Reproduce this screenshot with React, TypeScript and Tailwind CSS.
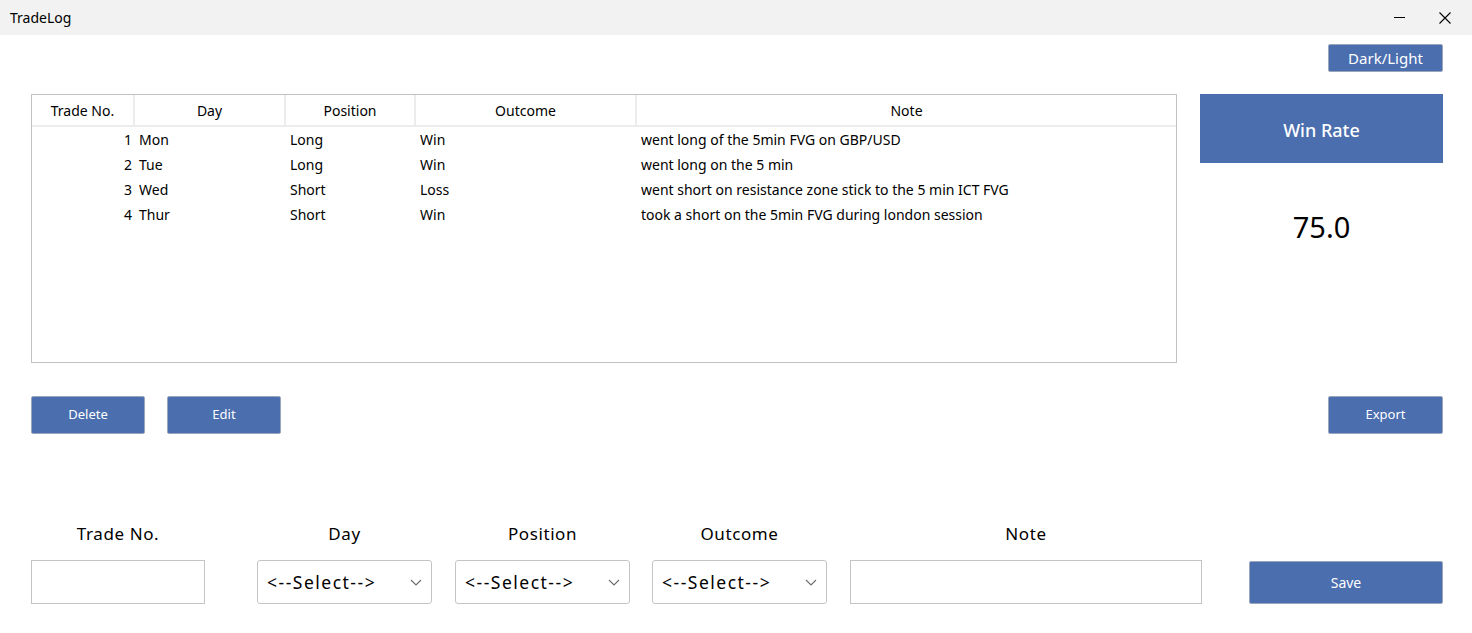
import React from "react";

const rows = [
  { n: 1, day: "Mon", pos: "Long", out: "Win", note: "went long of the 5min FVG on GBP/USD" },
  { n: 2, day: "Tue", pos: "Long", out: "Win", note: "went long on the 5 min" },
  { n: 3, day: "Wed", pos: "Short", out: "Loss", note: "went short on resistance zone stick to the 5 min ICT FVG" },
  { n: 4, day: "Thur", pos: "Short", out: "Win", note: "took a short on the 5min FVG during london session" },
];

const font = { fontFamily: '"Noto Sans", "Open Sans", sans-serif' };

function Chevron() {
  return (
    <svg width="12" height="7" viewBox="0 0 12 7" className="text-[#6b6b6b]">
      <path d="M1 1 L6 6 L11 1" fill="none" stroke="currentColor" strokeWidth="1.1" />
    </svg>
  );
}

function SelectBox({ w }: { w: string }) {
  return (
    <div className={`${w} h-[44px] border border-[#c4c4c4] rounded-[3px] bg-white flex items-center justify-between pl-[9px] pr-[9px]`}>
      <span className="text-[17.5px] text-black tracking-[1.5px]">&lt;--Select--&gt;</span>
      <Chevron />
    </div>
  );
}

export default function App() {
  return (
    <div className="w-[1472px] h-[633px] bg-white overflow-hidden flex flex-col" style={font}>
      {/* Title bar */}
      <div className="h-[35px] bg-[#f2f2f2] flex items-center justify-between shrink-0">
        <span className="pl-[10px] text-[14px] text-black">TradeLog</span>
        <div className="flex items-center">
          <div className="w-[46px] h-[35px] flex items-center justify-center">
            <div className="w-[11px] h-[1px] bg-black"></div>
          </div>
          <div className="w-[46px] h-[35px] flex items-center justify-center mr-[4px]">
            <svg width="12" height="12" viewBox="0 0 12 12">
              <path d="M0.5 0.5 L11.5 11.5 M11.5 0.5 L0.5 11.5" stroke="black" strokeWidth="1.1" />
            </svg>
          </div>
        </div>
      </div>

      <div className="flex-1 flex flex-col pl-[31px] pr-[29px]">
        {/* Dark/Light */}
        <div className="flex justify-end mt-[9px]">
          <button className="w-[115px] h-[28px] bg-[#4a6eae] border border-[#9aa6bb] rounded-[2px] text-white text-[15px] leading-none">
            Dark/Light
          </button>
        </div>

        {/* Table + win rate */}
        <div className="flex mt-[22px] gap-[23px]">
          <div className="w-[1146px] h-[269px] border border-[#c2c2c2] bg-white text-[14px] text-black">
            <div className="flex h-[32px] border-b-2 border-[#ececec]">
              <div className="w-[103px] flex items-center justify-center border-r-2 border-[#ececec]">Trade No.</div>
              <div className="w-[151px] flex items-center justify-center border-r-2 border-[#ececec]">Day</div>
              <div className="w-[130px] flex items-center justify-center border-r-2 border-[#ececec]">Position</div>
              <div className="w-[221px] flex items-center justify-center border-r-2 border-[#ececec]">Outcome</div>
              <div className="flex-1 flex items-center justify-center">Note</div>
            </div>
            <div>
              {rows.map((r) => (
                <div key={r.n} className="flex h-[25px] items-center">
                  <div className="w-[100px] text-right">{r.n}</div>
                  <div className="w-[151px] pl-[7px]">{r.day}</div>
                  <div className="w-[130px] pl-[7px]">{r.pos}</div>
                  <div className="w-[221px] pl-[7px]">{r.out}</div>
                  <div className="flex-1 pl-[7px]">{r.note}</div>
                </div>
              ))}
            </div>
          </div>
          <div className="w-[243px] flex flex-col items-center">
            <div className="w-full h-[69px] bg-[#4a6eae] flex items-center justify-center text-white text-[18px] font-medium pt-[3px]">
              Win Rate
            </div>
            <div className="mt-[49px] text-[29px] text-black leading-none">75.0</div>
          </div>
        </div>

        {/* Buttons */}
        <div className="flex mt-[33px] items-center">
          <button className="w-[114px] h-[38px] bg-[#4a6eae] border border-[#9aa6bb] rounded-[2px] text-white text-[13px]">Delete</button>
          <button className="w-[114px] h-[38px] ml-[22px] bg-[#4a6eae] border border-[#9aa6bb] rounded-[2px] text-white text-[13px]">Edit</button>
          <div className="flex-1"></div>
          <button className="w-[115px] h-[38px] bg-[#4a6eae] border border-[#9aa6bb] rounded-[2px] text-white text-[13px]">Export</button>
        </div>

        {/* Form */}
        <div className="flex mt-[91px] items-end">
          <div className="flex flex-col items-center w-[174px]">
            <span className="text-[17px] text-black leading-none mb-[18px] tracking-[0.6px]">Trade No.</span>
            <div className="w-[174px] h-[44px] border border-[#c4c4c4] bg-white"></div>
          </div>
          <div className="flex flex-col items-center w-[175px] ml-[52px]">
            <span className="text-[17px] text-black leading-none mb-[18px] tracking-[0.6px]">Day</span>
            <SelectBox w="w-[175px]" />
          </div>
          <div className="flex flex-col items-center w-[175px] ml-[23px]">
            <span className="text-[17px] text-black leading-none mb-[18px] tracking-[0.6px]">Position</span>
            <SelectBox w="w-[175px]" />
          </div>
          <div className="flex flex-col items-center w-[175px] ml-[22px]">
            <span className="text-[17px] text-black leading-none mb-[18px] tracking-[0.6px]">Outcome</span>
            <SelectBox w="w-[175px]" />
          </div>
          <div className="flex flex-col items-center w-[352px] ml-[23px]">
            <span className="text-[17px] text-black leading-none mb-[18px] tracking-[0.6px]">Note</span>
            <div className="w-[352px] h-[44px] border border-[#c4c4c4] bg-white"></div>
          </div>
          <button className="w-[195px] h-[43px] ml-[47px] bg-[#4a6eae] border border-[#9aa6bb] rounded-[2px] text-white text-[14px]">Save</button>
        </div>
      </div>
    </div>
  );
}
